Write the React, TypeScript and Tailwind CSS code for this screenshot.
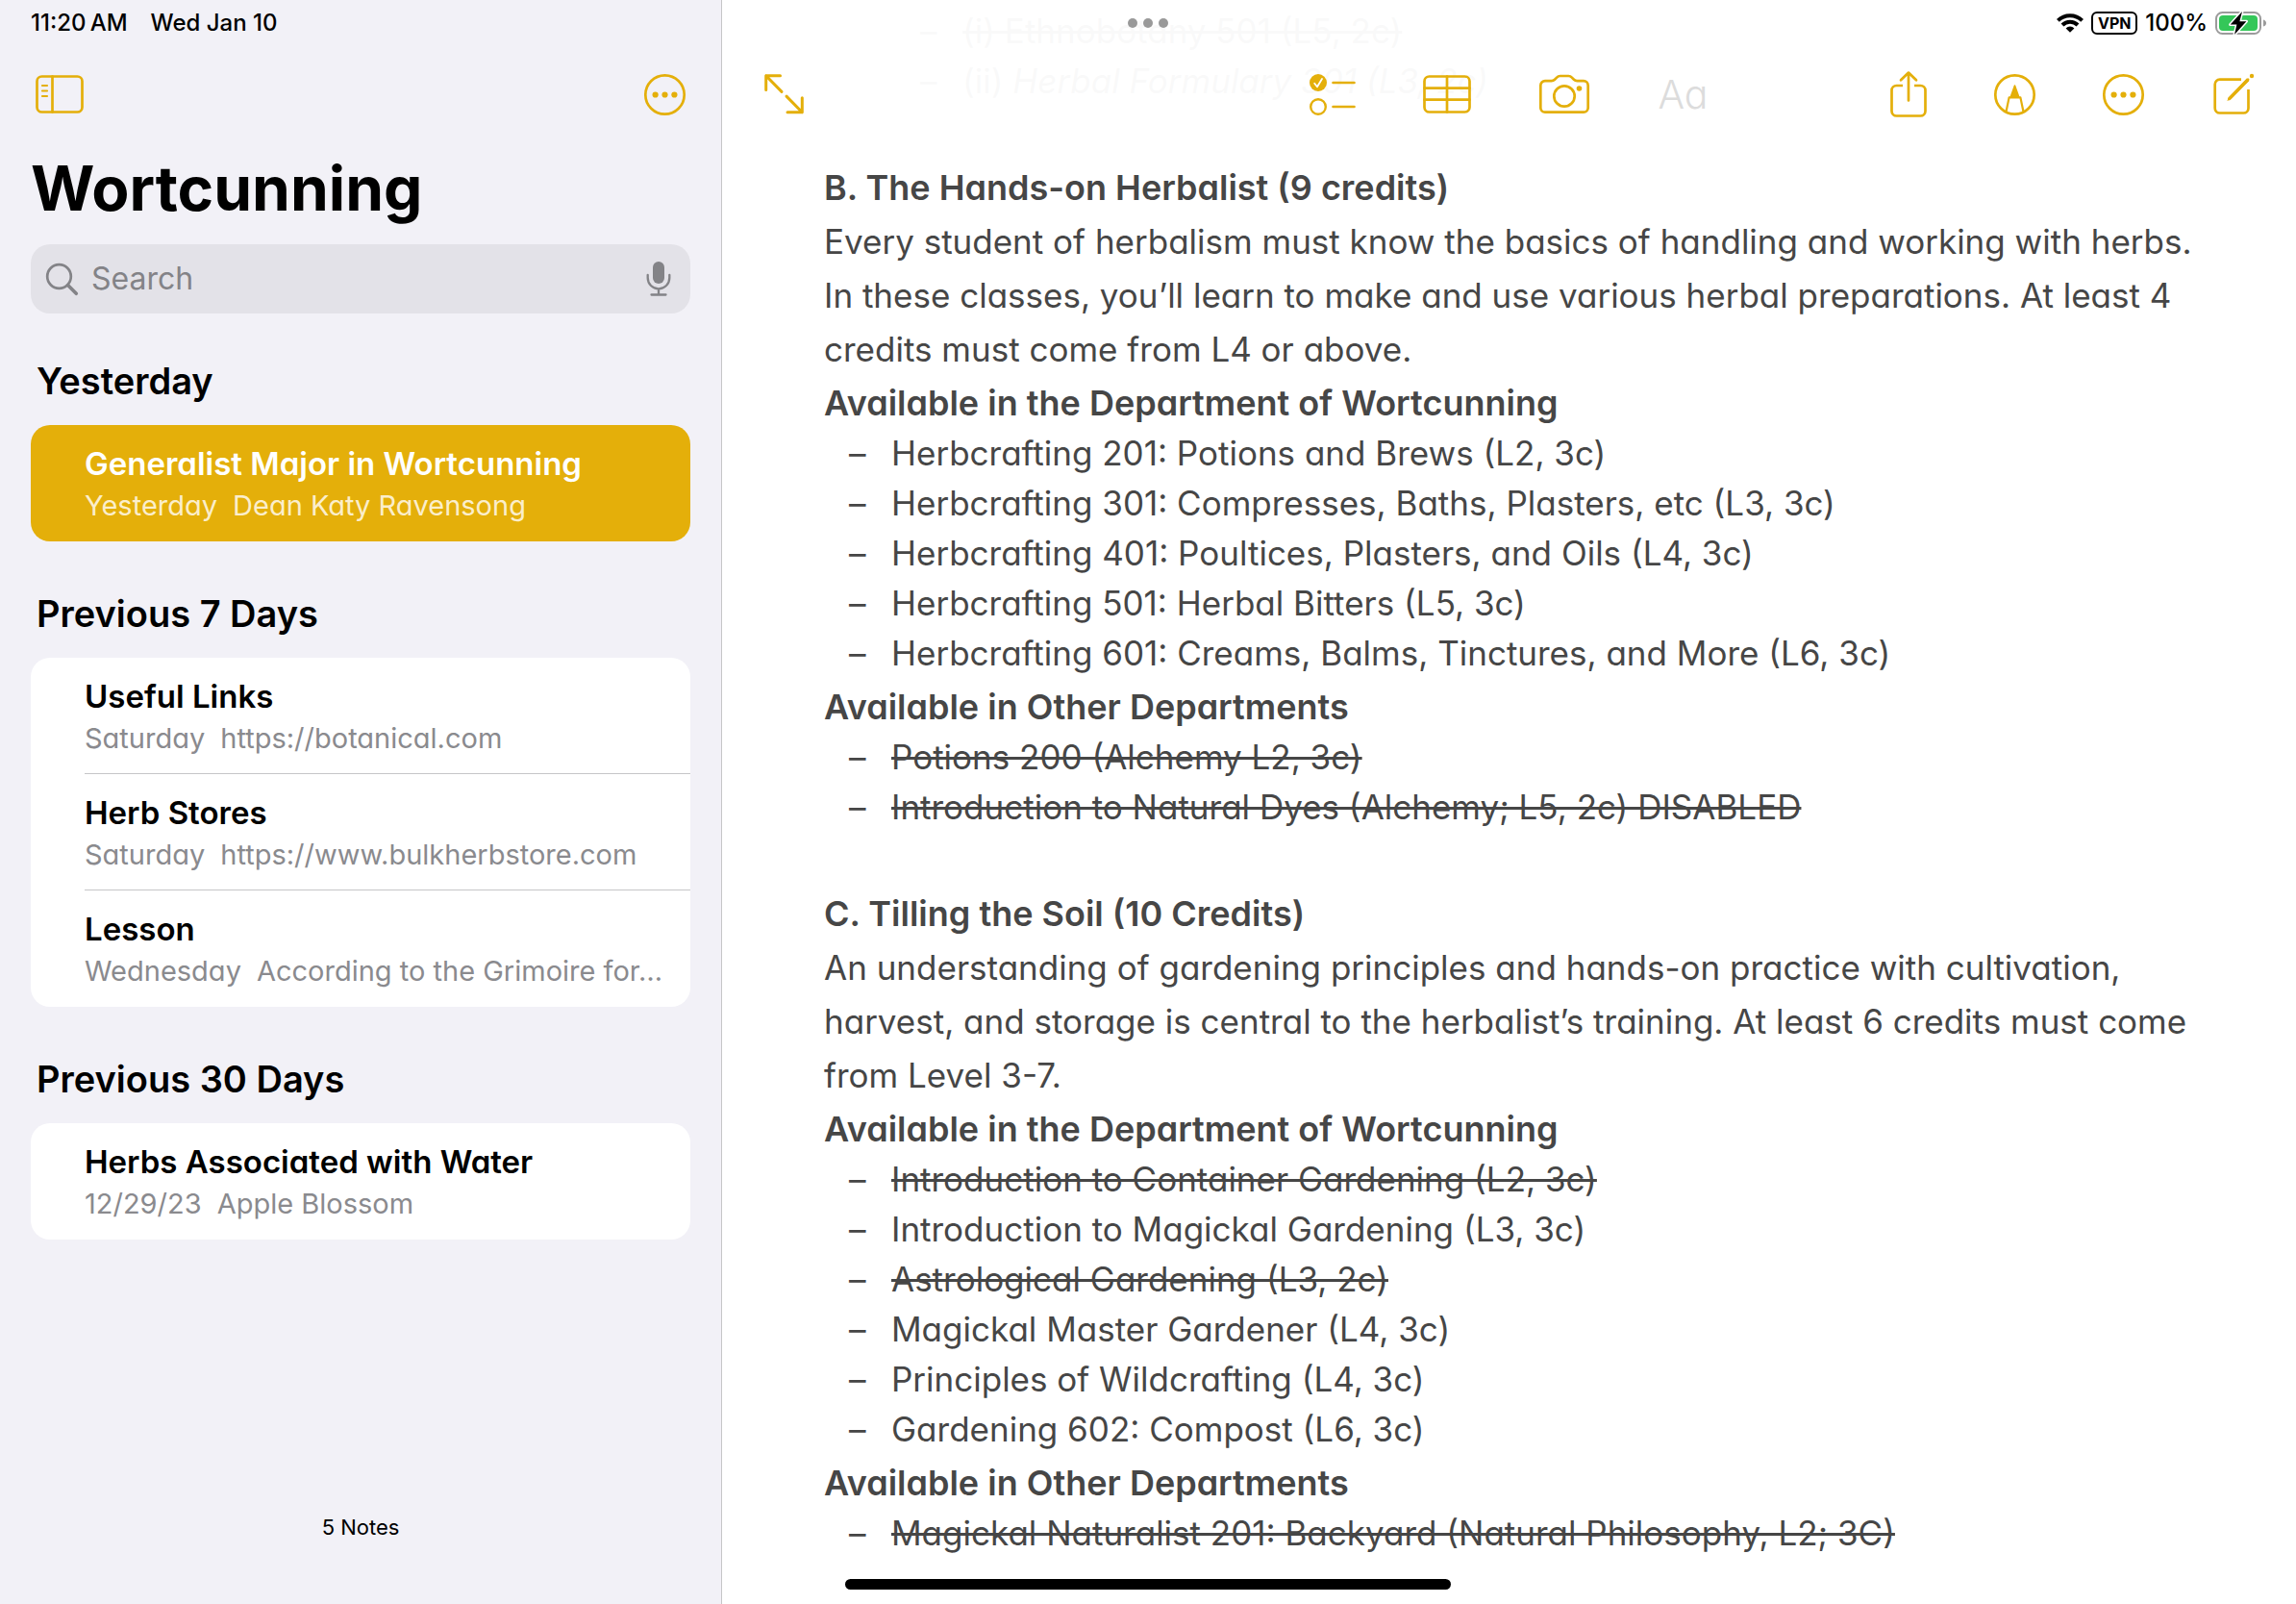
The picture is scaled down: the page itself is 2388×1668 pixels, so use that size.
import React from 'react';

type Note = { title: string; date: string; preview: string; selected?: boolean };

const sections: { heading: string; notes: Note[] }[] = [
  {
    heading: 'Yesterday',
    notes: [
      { title: 'Generalist Major in Wortcunning', date: 'Yesterday', preview: 'Dean Katy Ravensong', selected: true },
    ],
  },
  {
    heading: 'Previous 7 Days',
    notes: [
      { title: 'Useful Links', date: 'Saturday', preview: 'https://botanical.com' },
      { title: 'Herb Stores', date: 'Saturday', preview: 'https://www.bulkherbstore.com' },
      { title: 'Lesson', date: 'Wednesday', preview: 'According to the Grimoire for…' },
    ],
  },
  {
    heading: 'Previous 30 Days',
    notes: [{ title: 'Herbs Associated with Water', date: '12/29/23', preview: 'Apple Blossom' }],
  },
];

function Svg({ w, h, children }: { w: number; h: number; children: React.ReactNode }) {
  return (
    <svg
      width={w}
      height={h}
      viewBox={`0 0 ${w} ${h}`}
      fill="none"
      stroke="currentColor"
      strokeWidth="2.7"
      strokeLinecap="round"
      strokeLinejoin="round"
      className="overflow-visible"
      aria-hidden="true"
    >
      {children}
    </svg>
  );
}

function IconButton({ label, children }: { label: string; children: React.ReactNode }) {
  return (
    <button type="button" aria-label={label} className="shrink-0 text-[#e4af0a]">
      {children}
    </button>
  );
}

const SidebarIcon = () => (
  <Svg w={50} h={40}>
    <rect x="1.5" y="1.5" width="47" height="37" rx="5" />
    <path d="M17.5 1.5V38.5" />
    <path d="M7 11h5M7 16.5h5M7 22h5" strokeWidth="2.2" />
  </Svg>
);

const MoreIcon = () => (
  <Svg w={43} h={43}>
    <circle cx="21.5" cy="21.5" r="20.2" />
    <g fill="currentColor" stroke="none">
      <circle cx="11.6" cy="21.5" r="3.1" />
      <circle cx="21.5" cy="21.5" r="3.1" />
      <circle cx="31.4" cy="21.5" r="3.1" />
    </g>
  </Svg>
);

const ExpandIcon = () => (
  <Svg w={41} h={42}>
    <path d="M16.5 1.7H1.7V16.5M1.7 1.7L18 18.4M24 39.8H39.3V24.8M39.3 39.8L23 23.1" strokeWidth="3" />
  </Svg>
);

const ChecklistIcon = () => (
  <Svg w={48} h={43}>
    <circle cx="9" cy="9" r="9" fill="currentColor" stroke="none" />
    <path d="M5.2 9.8L8 13.2L13 5" stroke="#fff" strokeWidth="1.8" />
    <circle cx="9" cy="34" r="7.8" strokeWidth="2.4" />
    <path d="M24.5 9H46.5M24.5 34H46.5" strokeWidth="2.6" />
  </Svg>
);

const TableIcon = () => (
  <Svg w={50} h={40}>
    <rect x="1.5" y="1.5" width="47" height="37" rx="5" />
    <path d="M25 1.5V38.5M1.5 13.7H48.5M1.5 25.7H48.5" />
  </Svg>
);

const CameraIcon = () => (
  <Svg w={54} h={42}>
    <path d="M7 7.2H13.5Q15.6 7.2 17 5.8L19.4 3.4Q20.6 2 22.6 2H31.4Q33.4 2 34.6 3.4L37 5.8Q38.4 7.2 40.5 7.2H47A4.7 4.7 0 0 1 51.7 11.9V35A4.7 4.7 0 0 1 47 39.7H7A4.7 4.7 0 0 1 2.3 35V11.9A4.7 4.7 0 0 1 7 7.2Z" />
    <circle cx="27" cy="23" r="10.7" />
    <circle cx="42.5" cy="15" r="2.8" fill="currentColor" stroke="none" />
  </Svg>
);

const ShareIcon = () => (
  <Svg w={38} h={48}>
    <path d="M13 15H6.5A5 5 0 0 0 1.5 20V41.5A5 5 0 0 0 6.5 46.5H31.5A5 5 0 0 0 36.5 41.5V20A5 5 0 0 0 31.5 15H25" strokeLinecap="butt" />
    <path d="M19 30.5V2M11 9.2L19 1.6L27 9.2" />
  </Svg>
);

const MarkupIcon = () => (
  <Svg w={43} h={43}>
    <circle cx="21.5" cy="21.5" r="20.2" />
    <path d="M12.6 38.8L15.6 24.4H27.4L30.4 38.8" strokeWidth="2.2" />
    <path d="M21.5 12L25.8 24H17.2Z" fill="currentColor" strokeWidth="1.6" />
  </Svg>
);

const ComposeIcon = () => (
  <Svg w={44} h={44}>
    <path d="M31 6.7H8.7A5 5 0 0 0 3.7 11.7V36.5A5 5 0 0 0 8.7 41.5H33.5A5 5 0 0 0 38.5 36.5V17" strokeLinecap="butt" />
    <path d="M16.3 29.1L18 25.2L36.8 5.4L39.4 8L20.4 27.2Z" fill="currentColor" stroke="none" />
    <path d="M18.6 26.6L38 6.8" strokeWidth="3" />
    <circle cx="42" cy="3" r="2.2" fill="currentColor" stroke="none" />
  </Svg>
);

function Sidebar() {
  return (
    <aside className="flex w-[751px] shrink-0 flex-col border-r border-[#c6c6c8] bg-[#f2f1f7] px-8 text-black">
      <div className="flex h-12 items-center gap-6 text-[24px] font-medium leading-none">
        <span>11:20&#8201;AM</span>
        <span>Wed Jan 10</span>
      </div>
      <div className="flex h-[100px] items-center justify-between px-[5px]">
        <IconButton label="Hide sidebar">
          <SidebarIcon />
        </IconButton>
        <IconButton label="More options">
          <MoreIcon />
        </IconButton>
      </div>
      <h1 className="text-[64px] font-bold leading-[96px]">Wortcunning</h1>
      <label className="mt-2.5 mb-6 flex h-[72px] shrink-0 items-center gap-3.5 rounded-[20px] bg-[#e3e2e8] px-4 text-[#838387]">
        <Svg w={33} h={33}>
          <circle cx="13.5" cy="13.5" r="12.3" />
          <path d="M22.6 22.6L31.3 31.3" strokeWidth="3.6" />
        </Svg>
        <input
          type="search"
          aria-label="Search"
          placeholder="Search"
          className="min-w-0 flex-1 bg-transparent text-[32px] text-black outline-none placeholder:text-[#838387]"
        />
        <button type="button" aria-label="Dictate" className="mr-1">
          <Svg w={26} h={36}>
            <rect x="7" y="0" width="12" height="23" rx="6" fill="currentColor" stroke="none" />
            <path d="M1.7 14V17A11.3 11.3 0 0 0 24.3 17V14M13 28.5V34.5M5.5 34.5H20.5" strokeWidth="2.3" />
          </Svg>
        </button>
      </label>
      <nav aria-label="Notes" className="flex flex-col gap-[29px]">
        {sections.map((s) => (
          <section key={s.heading}>
            <h2 className="py-5 pl-1.5 text-[38px] font-semibold leading-[52px]">{s.heading}</h2>
            <ul className="overflow-hidden rounded-[20px] bg-white">
              {s.notes.map((n, i) => (
                <li key={n.title} className={n.selected ? 'bg-[#e4af0a] pl-14' : 'pl-14'}>
                  <button
                    type="button"
                    className={
                      'block w-full whitespace-nowrap border-b pt-[18px] pb-3.5 text-left [font-feature-settings:"cv11"] ' +
                      (i < s.notes.length - 1 ? 'border-[#c6c6c8]' : 'border-transparent')
                    }
                  >
                    <span className={'block text-[33px] font-semibold leading-[44px] ' + (n.selected ? 'text-white' : 'text-black')}>
                      {n.title}
                    </span>
                    <span className={'flex gap-4 text-[29px] leading-[44px] ' + (n.selected ? 'text-[#fbeecb]' : 'text-[#8a8a8e]')}>
                      <span>{n.date}</span>
                      <span>{n.preview}</span>
                    </span>
                  </button>
                </li>
              ))}
            </ul>
          </section>
        ))}
      </nav>
      <p className="mt-auto mb-16 text-center text-[22px] leading-8">5 Notes</p>
    </aside>
  );
}

function StatusIcons() {
  return (
    <div className="flex h-12 items-center justify-end gap-2 pr-[30px] text-black">
      <svg width="28" height="20" viewBox="0 0 28 20" fill="none" stroke="currentColor" strokeWidth="4" aria-hidden="true">
        <path d="M1.4 7.4A17.8 17.8 0 0 1 26.6 7.4M6 12A11.3 11.3 0 0 1 22 12" />
        <path d="M14 19.8L9.6 15.4A6.2 6.2 0 0 1 18.4 15.4Z" fill="currentColor" stroke="none" />
      </svg>
      <span className="flex h-6 w-12 items-center justify-center rounded-[6px] border-2 border-black text-[16px] font-bold leading-none">
        VPN
      </span>
      <span className="text-[24px] font-medium leading-none">100%</span>
      <svg width="54" height="26" viewBox="0 0 54 26" aria-hidden="true">
        <rect x="1" y="2" width="46" height="22" rx="6.5" fill="#fff" stroke="#9b9b9b" strokeWidth="2" />
        <rect x="4" y="5" width="40" height="16" rx="4" fill="#34c759" />
        <path d="M50 9.5Q53 10.5 53 13T50 16.5Z" fill="#9b9b9b" />
        <path d="M28 1L15.7 14.6H22.4L20 25L32.4 11.2H25.4Z" fill="#000" stroke="#fff" strokeWidth="3" paintOrder="stroke" strokeLinejoin="round" />
      </svg>
    </div>
  );
}

function Toolbar() {
  return (
    <header className="absolute inset-x-0 top-0 bg-white/97">
      <StatusIcons />
      <div className="flex h-[100px] items-center px-11">
        <div className="flex flex-1">
          <IconButton label="Full screen">
            <ExpandIcon />
          </IconButton>
        </div>
        <div className="flex items-center gap-[70px]">
          <IconButton label="Checklist">
            <ChecklistIcon />
          </IconButton>
          <IconButton label="Table">
            <TableIcon />
          </IconButton>
          <IconButton label="Camera">
            <CameraIcon />
          </IconButton>
          <button type="button" disabled className='text-[41px] font-light leading-none text-[#dcdcdc] [font-feature-settings:"cv11"]'>
            Aa
          </button>
        </div>
        <div className="flex flex-1 items-center justify-end gap-[70px]">
          <IconButton label="Share">
            <ShareIcon />
          </IconButton>
          <IconButton label="Markup">
            <MarkupIcon />
          </IconButton>
          <IconButton label="Note actions">
            <MoreIcon />
          </IconButton>
          <IconButton label="New note">
            <ComposeIcon />
          </IconButton>
        </div>
      </div>
    </header>
  );
}

function Item({ struck, children }: { struck?: boolean; children: React.ReactNode }) {
  return (
    <li className="flex leading-[52px]">
      <span className="w-11 shrink-0">–</span>
      {struck ? <s className="decoration-[3px]">{children}</s> : <span>{children}</span>}
    </li>
  );
}

function List({ nested, children }: { nested?: boolean; children: React.ReactNode }) {
  return <ul className={nested ? '-mt-0.5 mb-0.5 pl-[100px]' : '-mt-0.5 mb-0.5 pl-[26px]'}>{children}</ul>;
}

function Heading({ children }: { children: React.ReactNode }) {
  return <h3 className="text-[36px] font-semibold leading-[56px]">{children}</h3>;
}

export default function App() {
  return (
    <div className="flex h-screen overflow-hidden font-[Inter,sans-serif]">
      <Sidebar />
      <main className="relative min-w-0 flex-1 overflow-hidden bg-white">
        <article className='pt-2 pl-[106px] pr-[100px] text-[35px] leading-[56px] text-[#464646] [font-feature-settings:"cv11"]'>
          <List nested>
            <Item struck>(i) Ethnobotany 501 (L5, 2c)</Item>
            <Item>
              (ii) <em>Herbal Formulary 301 (L3, 2c)</em>
            </Item>
          </List>
          <div className="mt-[57px]">
            <Heading>B. The Hands-on Herbalist (9 credits)</Heading>
            <p>
              Every student of herbalism must know the basics of handling and working with herbs. In these classes,
              you’ll learn to make and use various herbal preparations. At least 4 credits must come from L4 or above.
            </p>
            <Heading>Available in the Department of Wortcunning</Heading>
            <List>
              <Item>Herbcrafting 201: Potions and Brews (L2, 3c)</Item>
              <Item>Herbcrafting 301: Compresses, Baths, Plasters, etc (L3, 3c)</Item>
              <Item>Herbcrafting 401: Poultices, Plasters, and Oils (L4, 3c)</Item>
              <Item>Herbcrafting 501: Herbal Bitters (L5, 3c)</Item>
              <Item>Herbcrafting 601: Creams, Balms, Tinctures, and More (L6, 3c)</Item>
            </List>
            <Heading>Available in Other Departments</Heading>
            <List>
              <Item struck>Potions 200 (Alchemy L2, 3c)</Item>
              <Item struck>Introduction to Natural Dyes (Alchemy; L5, 2c) DISABLED</Item>
            </List>
          </div>
          <div className="mt-[57px]">
            <Heading>C. Tilling the Soil (10 Credits)</Heading>
            <p>
              An understanding of gardening principles and hands-on practice with cultivation, harvest, and storage is
              central to the herbalist’s training. At least 6 credits must come from Level 3-7.
            </p>
            <Heading>Available in the Department of Wortcunning</Heading>
            <List>
              <Item struck>Introduction to Container Gardening (L2, 3c)</Item>
              <Item>Introduction to Magickal Gardening (L3, 3c)</Item>
              <Item struck>Astrological Gardening (L3, 2c)</Item>
              <Item>Magickal Master Gardener (L4, 3c)</Item>
              <Item>Principles of Wildcrafting (L4, 3c)</Item>
              <Item>Gardening 602: Compost (L6, 3c)</Item>
            </List>
            <Heading>Available in Other Departments</Heading>
            <List>
              <Item struck>Magickal Naturalist 201: Backyard (Natural Philosophy, L2; 3C)</Item>
            </List>
          </div>
        </article>
        <Toolbar />
      </main>
      <button type="button" aria-label="Multitasking" className="absolute top-[19px] left-1/2 flex -translate-x-1/2 gap-1.5">
        <i className="size-2.5 rounded-full bg-[#999]" />
        <i className="size-2.5 rounded-full bg-[#999]" />
        <i className="size-2.5 rounded-full bg-[#999]" />
      </button>
      <div className="absolute bottom-[15px] left-1/2 h-[11px] w-[630px] -translate-x-1/2 rounded-full bg-black" />
    </div>
  );
}
